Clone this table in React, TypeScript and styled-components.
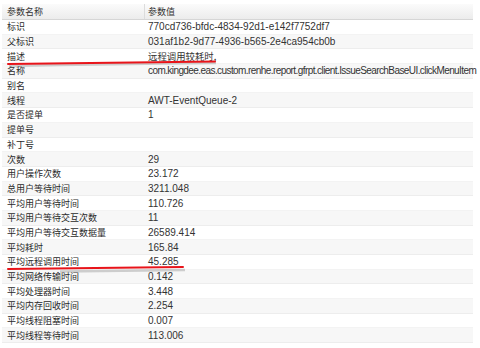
import React from "react";
import styled, { createGlobalStyle } from "styled-components";

const Global = createGlobalStyle`
  html, body { margin: 0; padding: 0; background: #fff; }
  body { width: 480px; height: 348px; overflow: hidden; }
`;

const Page = styled.div`
  position: relative;
  width: 480px;
  height: 348px;
  padding: 4px 0 0 2px;
  box-sizing: border-box;
`;

const Table = styled.div`
  width: 471px;
  display: flex;
  flex-direction: column;
`;

const HeaderRow = styled.div`
  display: grid;
  grid-template-columns: 142px 1fr;
  height: 16px;
  box-sizing: border-box;
  background: linear-gradient(#fbfbfb, #ececec);
  border-bottom: 1px solid #d6d6d6;
`;

const HeadCell = styled.div<{ $divider?: boolean }>`
  display: flex;
  align-items: center;
  padding-left: ${(p) => (p.$divider ? "3px" : "5px")};
  border-left: ${(p) => (p.$divider ? "1px solid #dcdcdc" : "none")};
  font-family: "Noto Sans CJK SC", sans-serif;
  font-size: 9px;
  color: #333;
`;

const Row = styled.div<{ $shaded: boolean }>`
  display: grid;
  grid-template-columns: 142px 1fr;
  height: 14.7px;
  box-sizing: border-box;
  background: ${(p) => (p.$shaded ? "#f7f7f7" : "#ffffff")};
  border-bottom: 1px solid ${(p) => (p.$shaded ? "#ededed" : "#f3f3f3")};
`;

const Label = styled.div`
  display: flex;
  align-items: center;
  padding-left: 5px;
  font-family: "Noto Sans CJK SC", sans-serif;
  font-size: 9px;
  color: #2a2a2a;
  white-space: nowrap;
`;

const Value = styled.div<{ $cjk?: boolean; $tight?: boolean }>`
  display: flex;
  align-items: center;
  padding-left: 4px;
  font-family: ${(p) =>
    p.$cjk ? '"Noto Sans CJK SC", sans-serif' : '"Liberation Sans", Arial, sans-serif'};
  font-size: ${(p) => (p.$cjk ? "9.4px" : "10px")};
  letter-spacing: ${(p) => (p.$tight ? "-0.58px" : "0")};
  color: #333;
  white-space: nowrap;
`;

const Marks = styled.svg`
  position: absolute;
  left: 0;
  top: 0;
  pointer-events: none;
`;

const rows: [string, string][] = [
  ["标识", "770cd736-bfdc-4834-92d1-e142f7752df7"],
  ["父标识", "031af1b2-9d77-4936-b565-2e4ca954cb0b"],
  ["描述", "远程调用较耗时,"],
  ["名称", "com.kingdee.eas.custom.renhe.report.gfrpt.client.IssueSearchBaseUI.clickMenuItem"],
  ["别名", ""],
  ["线程", "AWT-EventQueue-2"],
  ["是否提单", "1"],
  ["提单号", ""],
  ["补丁号", ""],
  ["次数", "29"],
  ["用户操作次数", "23.172"],
  ["总用户等待时间", "3211.048"],
  ["平均用户等待时间", "110.726"],
  ["平均用户等待交互次数", "11"],
  ["平均用户等待交互数据量", "26589.414"],
  ["平均耗时", "165.84"],
  ["平均远程调用时间", "45.285"],
  ["平均网络传输时间", "0.142"],
  ["平均处理器时间", "3.448"],
  ["平均内存回收时间", "2.254"],
  ["平均线程阻塞时间", "0.007"],
  ["平均线程等待时间", "113.006"],
];

const hasCjk = (s: string) => /[\u4e00-\u9fff]/.test(s);

export default function App() {
  return (
    <>
      <Global />
      <Page>
        <Table>
          <HeaderRow>
            <HeadCell>参数名称</HeadCell>
            <HeadCell $divider>参数值</HeadCell>
          </HeaderRow>
          {rows.map(([k, v], i) => (
            <Row key={k} $shaded={i % 2 === 1}>
              <Label>{k}</Label>
              <Value $cjk={hasCjk(v)} $tight={v.length > 60}>
                {v}
              </Value>
            </Row>
          ))}
        </Table>
        <Marks width="480" height="348" viewBox="0 0 480 348">
          <path d="M9 66 Q110 64 216 63" stroke="#9a9a9a" strokeOpacity="0.45" strokeWidth="2.5" fill="none" />
          <path d="M8 64 Q110 62.5 215 61.5" stroke="#e8141a" strokeWidth="2" fill="none" strokeLinecap="round" />
          <path d="M60 271.5 Q120 271 185 270" stroke="#9a9a9a" strokeOpacity="0.45" strokeWidth="2.5" fill="none" />
          <path d="M8 269 Q95 268 183 267" stroke="#e8141a" strokeWidth="2" fill="none" strokeLinecap="round" />
        </Marks>
      </Page>
    </>
  );
}
